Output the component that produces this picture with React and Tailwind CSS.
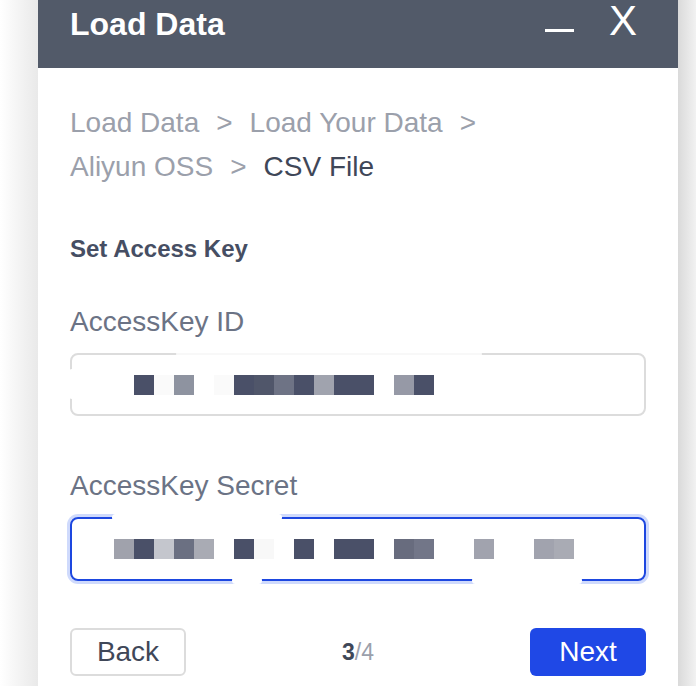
import React from "react";

const D = "#4a5068";
const row1 = [
  [134, D], [154, "#fafafa"], [174, "#8e93a0"], [214, "#fafafa"], [234, D], [254, "#50566a"],
  [274, "#6e7385"], [294, D], [314, "#a0a3ae"], [334, D], [354, D], [394, "#9699a6"], [414, D],
];
const row2 = [
  [114, "#a0a2ac"], [134, D], [154, "#c4c6cd"], [174, "#6b7082"], [194, "#a9abb4"], [234, D],
  [254, "#f8f8f8"], [294, D], [334, D], [354, D], [394, "#686c7e"], [414, "#727688"],
  [474, "#a1a3ae"], [534, "#a1a3ae"], [554, "#a9abb4"],
];

function Mosaic({ cells, offset }) {
  return (
    <div className="absolute inset-0 pointer-events-none">
      {cells.map(([x, c], i) => (
        <div
          key={i}
          className="absolute w-[20px] h-[20px]"
          style={{ left: x - offset, top: 20, background: c }}
        />
      ))}
    </div>
  );
}

export default function App() {
  const font = { fontFamily: '"Liberation Sans", Arial, sans-serif' };
  return (
    <div className="flex h-[686px] w-[696px] overflow-hidden bg-white" style={font}>
      <div className="w-[38px] shrink-0 bg-gradient-to-r from-white to-[#e9e9e9]" />
      <div className="w-[640px] shrink-0 bg-white flex flex-col">
        <div className="h-[68px] bg-[#525a69] flex items-start pl-[32px] pr-[41px] text-white">
          <div className="text-[32px] font-bold leading-[40px] mt-[4px]">Load Data</div>
          <div className="ml-auto flex items-start">
            <div className="w-[29px] h-[3px] bg-white mt-[29px]" />
            <div className="ml-[35px] text-[42px] leading-[42px] font-normal">X</div>
          </div>
        </div>
        <div className="px-[32px] pt-[33px] flex flex-col">
          <div className="text-[28px] leading-[44px] text-[#9ba0ab]">
            <div>
              Load Data<span className="mx-[17px]">&gt;</span>Load Your Data<span className="ml-[17px]">&gt;</span>
            </div>
            <div>
              Aliyun OSS<span className="mx-[17px]">&gt;</span>
              <span className="text-[#3f4758]">CSV File</span>
            </div>
          </div>
          <div className="mt-[44px] text-[24px] leading-[32px] font-bold text-[#464e63]">Set Access Key</div>
          <div className="mt-[39px] text-[28px] leading-[36px] text-[#6b7385]">AccessKey ID</div>
          <div className="mt-[13px] relative h-[63px] rounded-[8px] border-2 border-[#dcdcdc]">
            <Mosaic cells={row1} offset={72} />
            <div className="absolute left-[104px] top-[-3px] w-[306px] h-[4px] bg-white/80 rounded-full" />
            <div className="absolute left-[-3px] top-[14px] w-[6px] h-[30px] bg-white rounded-full" />
          </div>
          <div className="mt-[52px] text-[28px] leading-[36px] text-[#6b7385]">AccessKey Secret</div>
          <div className="mt-[13px] relative h-[64px] rounded-[8px] border-2 border-[#1d47e0] ring-[3px] ring-[#cfdafc]">
            <Mosaic cells={row2} offset={72} />
            <div className="absolute left-[40px] top-[-5px] w-[170px] h-[7px] bg-white rounded-full" />
            <div className="absolute left-[160px] bottom-[-5px] w-[30px] h-[7px] bg-white rounded-full" />
            <div className="absolute left-[400px] bottom-[-5px] w-[110px] h-[7px] bg-white rounded-full" />
          </div>
          <div className="mt-[47px] flex items-center">
            <button className="w-[116px] h-[48px] rounded-[6px] border-2 border-[#dcdcdc] text-[28px] text-[#3f4758] bg-white">
              Back
            </button>
            <div className="flex-1 text-center text-[23px] text-[#9ba0ab]">
              <span className="font-bold text-[#3f4758]">3</span>/4
            </div>
            <button className="w-[116px] h-[48px] rounded-[6px] bg-[#1f48e6] text-[28px] text-white">
              Next
            </button>
          </div>
        </div>
      </div>
      <div className="flex-1 bg-gradient-to-r from-[#dadada] to-[#f2f2f2]" />
    </div>
  );
}
